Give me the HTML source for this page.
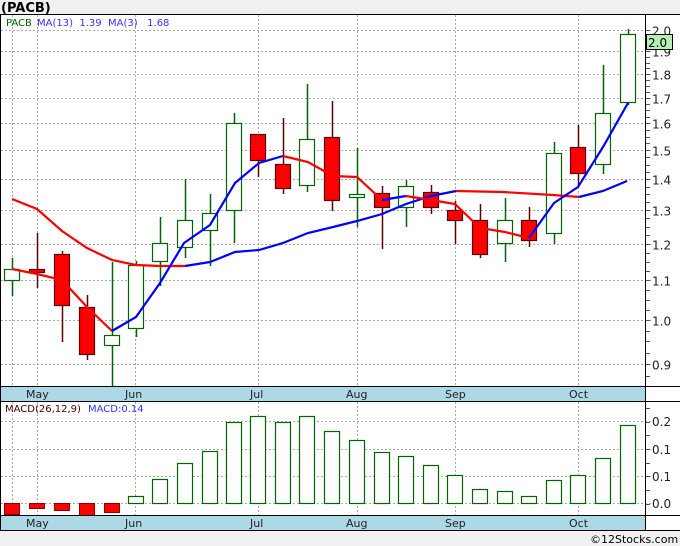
<!DOCTYPE html>
<html><head><meta charset="utf-8"><style>
html,body{margin:0;padding:0;background:#f0f0f0;width:680px;height:546px;overflow:hidden}
svg{display:block;font-family:"DejaVu Sans",Verdana,sans-serif}
</style></head><body>
<svg id="s" width="680" height="546" xmlns="http://www.w3.org/2000/svg">
<rect x="0" y="0" width="680" height="546" fill="#f0f0f0"/>
<text x="1" y="12" font-size="13" font-weight="bold" fill="#000">(PACB)</text>
<rect x="0" y="14" width="680" height="516" fill="#fff"/>
<g id="g"></g>
<rect x="0" y="387" width="645" height="14" fill="#add8e6"/>
<rect x="0" y="516" width="645" height="14" fill="#add8e6"/>
<line x1="0" y1="14.5" x2="680" y2="14.5" stroke="#000"/>
<line x1="0" y1="386.5" x2="680" y2="386.5" stroke="#000"/>
<line x1="0" y1="401.5" x2="680" y2="401.5" stroke="#000"/>
<line x1="0" y1="515.5" x2="680" y2="515.5" stroke="#000"/>
<line x1="0" y1="530.5" x2="680" y2="530.5" stroke="#000"/>
<line x1="0.5" y1="14" x2="0.5" y2="530" stroke="#000"/>
<line x1="645.5" y1="14" x2="645.5" y2="530" stroke="#000"/>
<g font-size="11" fill="#222">
<text x="26" y="398">May</text><text x="125" y="398">Jun</text><text x="250" y="398">Jul</text><text x="346" y="398">Aug</text><text x="445" y="398">Sep</text><text x="569" y="398">Oct</text>
<text x="26" y="527">May</text><text x="125" y="527">Jun</text><text x="250" y="527">Jul</text><text x="346" y="527">Aug</text><text x="445" y="527">Sep</text><text x="569" y="527">Oct</text>
</g>
<text x="6" y="26" font-size="10" fill="#006400">PACB</text>
<text x="37" y="26" font-size="10" fill="#3333ff">MA(13)&#160; 1.39&#160; MA(3)&#160;&#160; 1.68</text>
<text x="5" y="412" font-size="10" fill="#440000">MACD(26,12,9)</text>
<text x="88" y="412" font-size="10" fill="#3333ff">MACD:0.14</text>
<text x="590" y="543" font-size="11" fill="#000">©12Stocks.com</text>
</svg>
<script>
var g=document.getElementById('g'),h='';
function Y(p){return 320-418.5*Math.log(p);}
[12,37,135,258,357,455,578].forEach(function(x){h+='<line x1="'+(x+.5)+'" y1="15" x2="'+(x+.5)+'" y2="386" stroke="#aaa" stroke-dasharray="2,2"/><line x1="'+(x+.5)+'" y1="402" x2="'+(x+.5)+'" y2="515" stroke="#aaa" stroke-dasharray="2,2"/>';});
for(var v=9;v<=20;v++){var p=v/10,y=Math.round(Y(p))+.5;h+='<line x1="1" y1="'+y+'" x2="652" y2="'+y+'" stroke="#aaa" stroke-dasharray="2,2"/><text x="652" y="'+(y+5)+'" font-size="12" fill="#222">'+p.toFixed(1)+'</text>';}
for(var t=0.875;t<=2.01;t+=0.025){var y=Math.round(Y(t))+.5;if(y>16&&y<386)h+='<line x1="645" y1="'+y+'" x2="650" y2="'+y+'" stroke="#555"/>';}
[421,449,476,503].forEach(function(y,i){h+='<line x1="1" y1="'+(y+.5)+'" x2="652" y2="'+(y+.5)+'" stroke="#aaa" stroke-dasharray="2,2"/><text x="652" y="'+(y+5)+'" font-size="12" fill="#222">'+['0.2','0.1','0.1','0.0'][i]+'</text>';});
for(var y=408;y<515;y+=13.7)h+='<line x1="645" y1="'+Math.round(y)+'.5" x2="650" y2="'+Math.round(y)+'.5" stroke="#555"/>';
var C=[[12,1,269,280,258,296],[37,0,269,272,233,288],[62,0,254,305,251,342],[87,0,307,354,295,360],[112,1,335,345,262,386],[136,1,265,328,261,337],[160,1,243,261,217,286],[185,1,220,247,179,258],[210,1,213,230,194,266],[234,1,123,210,113,243],[258,0,134,160,134,177],[283,0,164,188,118,194],[307,1,139,185,84,192],[332,0,137,200,101,211],[357,1,194,197,148,227],[382,0,193,207,186,249],[406,1,186,207,180,227],[431,0,192,207,185,214],[455,0,210,220,201,244],[480,0,220,254,204,258],[505,1,220,243,198,262],[529,0,220,240,207,247],[554,1,153,233,142,244],[578,0,147,173,125,187],[603,1,113,164,65,174],[628,1,34,102,29,105]];
C.forEach(function(c){var col=c[1]?'#006400':'#5a0000';h+='<line x1="'+(c[0]+.5)+'" y1="'+c[4]+'" x2="'+(c[0]+.5)+'" y2="'+c[5]+'" stroke="'+col+'" stroke-width="1.5"/>';h+='<rect x="'+(c[0]-7.5)+'" y="'+(c[2]+.5)+'" width="15" height="'+Math.max(2,c[3]-c[2])+'" fill="'+(c[1]?'#fff':'#f00')+'" stroke="'+col+'" stroke-width="1.2"/>';});
function pl(pts,col){h+='<polyline fill="none" stroke="'+col+'" stroke-width="2.2" points="'+pts+'"/>';}
pl('12,199 37,209 62,231 87,248 112,260 136,265 160,266 185,266','#f00');
pl('185,266 210,262 235,252 259,250 283,243 308,233 333,227 357,221 382,214 406,204 431,196 456,191','#00f');
pl('456,191 503,192 553,195 579,197','#f00');
pl('579,197 603,191 627,181','#00f');
pl('12,269 37,274 62,280 87,307 112,331','#f00');
pl('112,331 136,317 160,283 184,243 210,225 235,183 259,163 283,156','#00f');
pl('283,156 308,162 333,176 357,177 382,200','#f00');
pl('382,200 406,196','#00f');
pl('406,196 431,200 455,204 480,228 505,232 529,238','#f00');
pl('529,238 554,203 578,187 603,147 628,103','#00f');
var M=[514,508,510,515,512,496,479,463,451,422,416,422,416,431,440,452,456,465,475,489,491,496,480,475,458,425];
M.forEach(function(m,i){var x=C[i][0];if(m>503)h+='<rect x="'+(x-7.5)+'" y="503.5" width="15" height="'+(m-503)+'" fill="#f00" stroke="#8b0000"/>';else h+='<rect x="'+(x-7.5)+'" y="'+(m+.5)+'" width="15" height="'+(503-m)+'" fill="#fff" stroke="#006400" stroke-width="1.2"/>';});
h+='<rect x="646.5" y="34.5" width="26" height="15" fill="#b4f0b4" stroke="#000"/><text x="648" y="47" font-size="12" fill="#000">2.0</text>';
g.innerHTML=h;
</script>
</body></html>
